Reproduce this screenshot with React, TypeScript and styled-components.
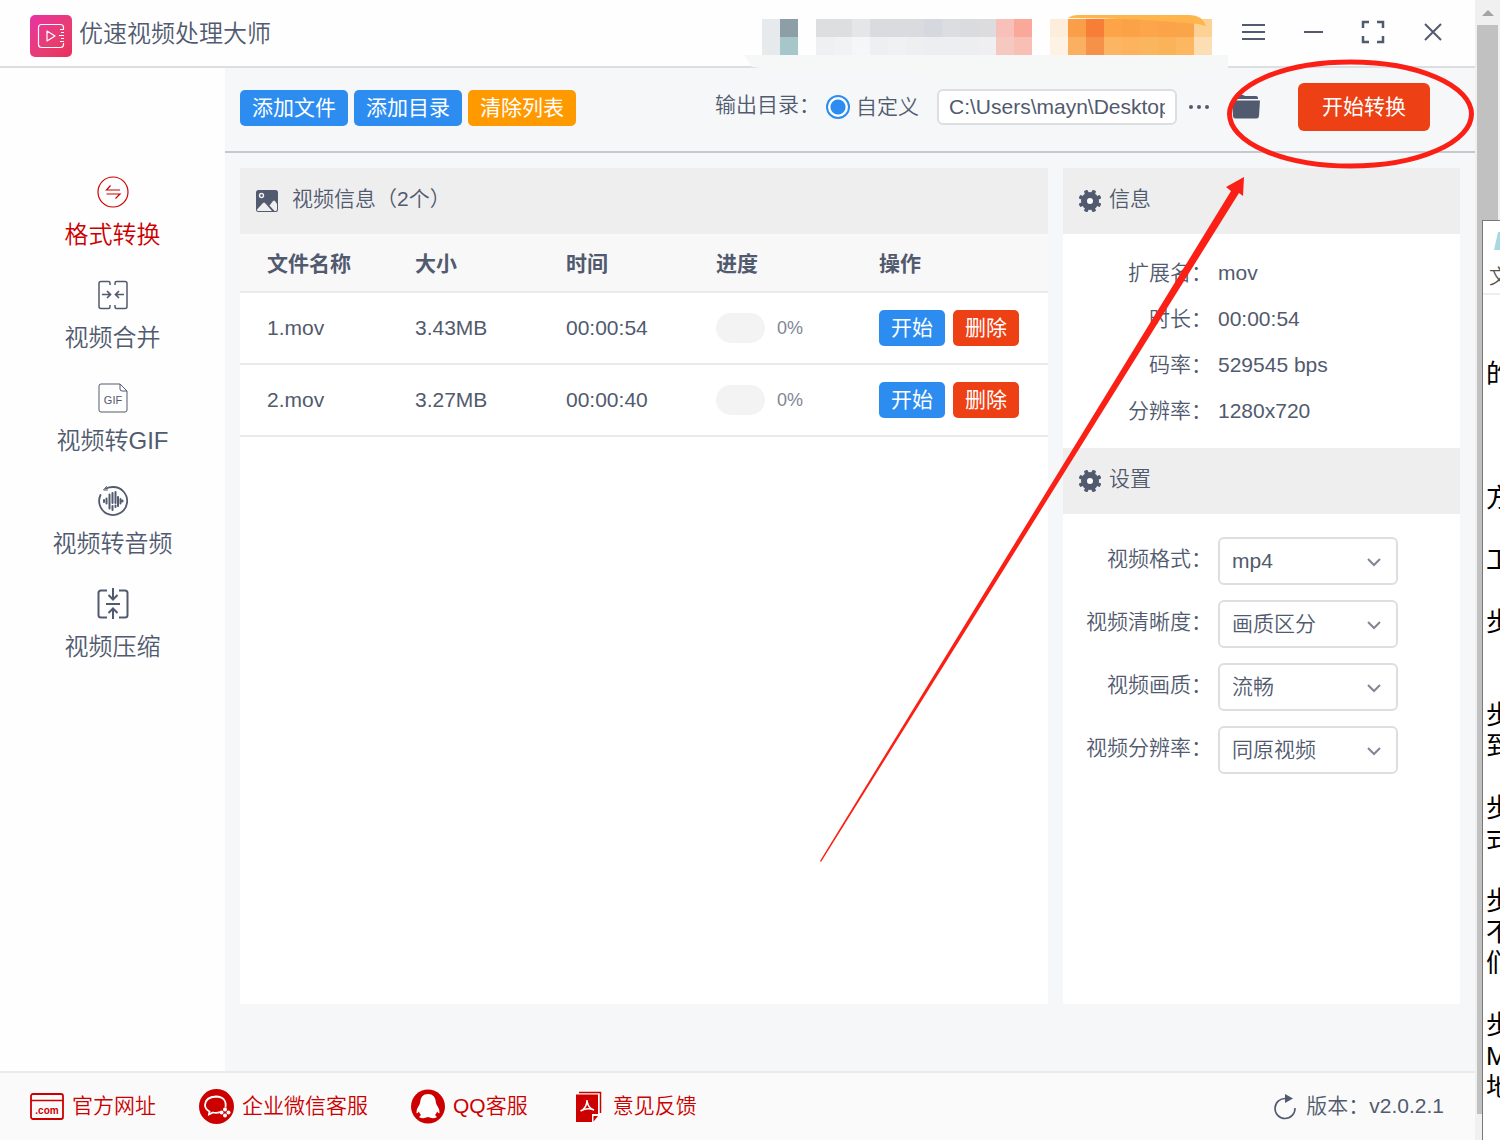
import React, { useState } from "react";
import styled, { createGlobalStyle } from "styled-components";

const ink = "#515a6e";
const blue = "#2d8cf0";
const orange = "#ff9900";
const red = "#ed4014";
const brand = "#cc0000";
const line = "#dcdee2";
const fonts = '"Liberation Sans", "Noto Sans CJK SC", sans-serif';

const GlobalStyle = createGlobalStyle`
  * { box-sizing: border-box; }
  body { margin: 0; background: #f0f0f0; }
  button, input, select { font-family: inherit; font-size: inherit; color: inherit; margin: 0; }
  svg { display: block; flex-shrink: 0; }
`;

const Desktop = styled.div`
  position: relative;
  display: flex;
  min-height: 100vh;
  overflow: hidden;
  font-family: ${fonts};
  font-size: 21px;
  font-weight: 350;
  line-height: 30px;
  color: ${ink};
`;

const Shell = styled.div`
  position: relative;
  flex: 1;
  min-width: 0;
  display: flex;
  flex-direction: column;
  background: #f5f7f9;
`;

const Header = styled.header`
  display: flex;
  align-items: center;
  height: 68px;
  padding: 0 24px 0 30px;
  border-bottom: 2px solid ${line};
  background: #fefefe;
`;

const Title = styled.h1`
  flex: 1;
  margin: 0 0 0 7px;
  padding-top: 2px;
  font-size: 24px;
  font-weight: inherit;
  line-height: 32px;
`;

const LogoBox = styled.div`
  padding-top: 6px;
`;

const WindowControls = styled.div`
  display: flex;
  gap: 24px;
  padding-bottom: 2px;
`;

const IconButton = styled.button`
  display: flex;
  align-items: center;
  justify-content: center;
  padding: 0;
  border: 0;
  background: none;
  cursor: pointer;
`;

const WindowButton = styled(IconButton)`
  width: 36px;
  height: 36px;
`;

const Redaction = styled.svg`
  position: absolute;
  top: 0;
  right: 240px;
`;

const Body = styled.div`
  flex: 1;
  display: flex;
`;

const Sidebar = styled.nav`
  flex: 0 0 225px;
  display: flex;
  flex-direction: column;
  gap: 25px;
  padding-top: 108px;
  background: #fefefe;
`;

const NavItem = styled.button<{ $active?: boolean }>`
  display: flex;
  flex-direction: column;
  align-items: center;
  gap: 8px;
  padding: 0;
  border: 0;
  background: none;
  font-weight: inherit;
  color: ${(p) => (p.$active ? brand : ink)};
  cursor: pointer;
`;

const NavLabel = styled.span`
  height: 38px;
  font-size: 24px;
  line-height: 38px;
`;

const Main = styled.main`
  flex: 1;
  min-width: 0;
  display: flex;
  flex-direction: column;
`;

const Toolbar = styled.div`
  display: flex;
  align-items: center;
  justify-content: space-between;
  padding: 15px 45px 20px 15px;
  border-bottom: 2px solid #c5c8ce;
`;

const ButtonGroup = styled.div<{ $gap: number }>`
  display: flex;
  gap: ${(p) => p.$gap}px;
`;

const FileActions = styled(ButtonGroup)`
  padding-top: 2px;
`;

const Button = styled.button<{ $color: string; $large?: boolean }>`
  height: ${(p) => (p.$large ? 48 : 36)}px;
  padding: 0 ${(p) => (p.$large ? 24 : 12)}px;
  border: 0;
  border-radius: ${(p) => (p.$large ? 6 : 5)}px;
  background: ${(p) => p.$color};
  color: #fff;
  line-height: 30px;
  white-space: nowrap;
  cursor: pointer;
`;

const Output = styled.div`
  display: flex;
  align-items: center;
`;

const OutputTitle = styled.span`
  padding-bottom: 4px;
`;

const RadioLabel = styled.label`
  display: flex;
  align-items: center;
  gap: 6px;
  margin: 0 18px 0 6px;
`;

const Radio = styled.input`
  appearance: none;
  width: 24px;
  height: 24px;
  border: 2px solid ${blue};
  border-radius: 50%;
  background: radial-gradient(circle, ${blue} 7px, #fff 8px);
`;

const PathInput = styled.input`
  width: 240px;
  height: 36px;
  padding: 0 10px;
  border: 2px solid ${line};
  border-radius: 6px;
  background: #fff;
`;

const DotsButton = styled(IconButton)`
  margin: 0 22px 0 11px;
`;

const FolderButton = styled(IconButton)`
  margin-right: 38px;
`;

const Panels = styled.div`
  flex: 1;
  display: flex;
  gap: 15px;
  padding: 15px 15px 67px;
`;

const FilesPanel = styled.section`
  flex: 1;
  min-width: 0;
  background: #fff;
`;

const SidePanel = styled.aside`
  flex: 0 0 397px;
  background: #fff;
`;

const PanelHead = styled.h2<{ $gap: number }>`
  display: flex;
  align-items: center;
  gap: ${(p) => p.$gap}px;
  height: 66px;
  margin: 0;
  padding: 0 15px;
  background: #eee;
  font-size: 21px;
  font-weight: inherit;
`;

const PanelTitle = styled.span`
  padding-bottom: 4px;
`;

const Table = styled.table`
  width: 100%;
  border-collapse: separate;
  border-spacing: 0;
  table-layout: fixed;
`;

const Th = styled.th<{ $width?: number }>`
  width: ${(p) => (p.$width ? `${p.$width}px` : "auto")};
  height: 59px;
  padding: 2px 0 0 27px;
  border-bottom: 2px solid #e8eaec;
  background: #f8f8f9;
  text-align: left;
  font-weight: 700;
`;

const Td = styled.td`
  height: 72px;
  padding: 0 0 0 27px;
  border-bottom: 2px solid #e8eaec;
`;

const Progress = styled.div`
  display: flex;
  align-items: center;
  gap: 12px;
  font-size: 18px;
  color: #808695;
`;

const Track = styled.div`
  width: 49px;
  height: 30px;
  border-radius: 15px;
  background: #f3f3f3;
  overflow: hidden;
`;

const Bar = styled.div`
  height: 100%;
  background: ${blue};
`;

const InfoList = styled.dl`
  margin: 0;
  padding: 16px 0 14px;
`;

const InfoRow = styled.div`
  display: flex;
  align-items: center;
  gap: 6px;
  height: 46px;
`;

const Term = styled.dt`
  width: 149px;
  text-align: right;
`;

const Detail = styled.dd`
  margin: 0;
`;

const Form = styled.form`
  display: flex;
  flex-direction: column;
  gap: 15px;
  padding: 23px 0;
`;

const Field = styled.div`
  display: flex;
  align-items: center;
  gap: 6px;
`;

const FieldLabel = styled.label`
  width: 149px;
  padding-bottom: 4px;
  text-align: right;
`;

const SelectBox = styled.div`
  position: relative;
  width: 180px;
`;

const Select = styled.select`
  appearance: none;
  display: block;
  width: 100%;
  height: 48px;
  padding: 0 36px 2px 12px;
  border: 2px solid ${line};
  border-radius: 6px;
  background: #fff;
  font-weight: inherit;
`;

const Chevron = styled.svg`
  position: absolute;
  top: 20px;
  right: 17px;
  pointer-events: none;
`;

const Footer = styled.footer`
  display: flex;
  align-items: center;
  gap: 43px;
  height: 69px;
  padding: 0 31px 0 30px;
  border-top: 2px solid #e8eaec;
  background: #fafafa;
`;

const FooterLink = styled.a`
  display: flex;
  align-items: center;
  gap: 8px;
  color: ${brand};
  text-decoration: none;
`;

const FooterText = styled.span`
  padding-bottom: 2px;
`;

const Version = styled.div`
  display: flex;
  align-items: center;
  gap: 9px;
  margin-left: auto;
`;

const ScrollColumn = styled.div`
  flex: 0 0 25px;
  display: flex;
  flex-direction: column;
  padding: 0 2px 26px 2px;
  background: #f0f0f0;
`;

const ScrollArrow = styled.div`
  display: flex;
  align-items: center;
  justify-content: center;
  height: 25px;
`;

const ScrollThumb = styled.div`
  flex: 1;
  background: #c1c1c1;
`;

const Notepad = styled.div`
  position: absolute;
  top: 220px;
  right: 0;
  bottom: 0;
  width: 18px;
  overflow: hidden;
  border-top: 1px solid #777;
  border-left: 1px solid #777;
  background: #fff;
  color: #000;
`;

const NotepadHead = styled.div`
  display: flex;
  flex-direction: column;
  gap: 10px;
  height: 74px;
  padding-top: 9px;
  padding-left: 6px;
  border-bottom: 2px solid #eee;
  font-size: 20px;
  color: #555;
  white-space: nowrap;
`;

const NotepadLine = styled.div`
  height: 31px;
  padding-left: 3px;
  font-size: 26px;
  line-height: 31px;
  font-weight: 400;
  white-space: nowrap;
`;

const NotepadText = styled.div`
  padding-top: 64px;
`;

const Annotation = styled.svg`
  position: absolute;
  top: 0;
  right: 0;
  pointer-events: none;
`;

const Logo = () => (
  <svg width="42" height="42" viewBox="0 0 42 42" fill="none" stroke="#fff">
    <defs>
      <linearGradient id="logo" x1="0" y1="0" x2="1" y2="1">
        <stop offset="0" stopColor="#e834a4" />
        <stop offset="0.6" stopColor="#e83d72" />
        <stop offset="1" stopColor="#e92f5b" />
      </linearGradient>
    </defs>
    <rect width="42" height="42" rx="5" fill="url(#logo)" stroke="none" />
    <path d="M33.500 14V12.500a3 3 0 0 0-3-3h-19a3 3 0 0 0-3 3v17a3 3 0 0 0 3 3h19a3 3 0 0 0 3-3V28M17 16v10l8-5zM30 14.500h4M31 17.500h3M29 20.500h5M31 23.500h3M30 26.500h4" strokeWidth="1.200" strokeLinejoin="round" />
  </svg>
);

const ConvertIcon = () => (
  <svg width="32" height="32" viewBox="0 0 32 32" fill="none" stroke="currentColor" strokeWidth="1.200">
    <circle cx="16" cy="16" r="15" />
    <path d="M13.500 9.500 9.500 14h13.500M9.500 18H23l-4.500 4.500" />
  </svg>
);

const MergeIcon = () => (
  <svg width="32" height="32" viewBox="0 0 32 32" fill="none" stroke="currentColor" strokeWidth="1.500">
    <path d="M13 6V4q0-1.500-1.500-1.500H4Q2 2.500 2 4.500v23q0 2 2 2h7.500q1.500 0 1.500-1.500v-2M18 6V4q0-1.500 1.500-1.500H28q2 0 2 2v23q0 2-2 2h-8.500Q18 29.500 18 28v-2" />
    <path d="M5 15.500h8M10 12l3.500 3.500L10 19M27 15.500h-8M22 12l-3.500 3.500L22 19" strokeWidth="1.700" />
  </svg>
);

const GifIcon = () => (
  <svg width="32" height="32" viewBox="0 0 32 32" fill="none" stroke="currentColor">
    <path d="M23 2H4Q2 2 2 4v24q0 2 2 2h24q2 0 2-2V9zM23 2v5q0 2 2 2h5" />
    <text x="16" y="22" fontSize="11" textAnchor="middle" fill="currentColor" stroke="none">GIF</text>
  </svg>
);

const AudioIcon = () => (
  <svg width="32" height="32" viewBox="0 0 32 32" fill="none" stroke="currentColor" strokeLinecap="round">
    <path d="M9 3.500Q12 2 16 2A14 14 0 1 1 3.500 10" strokeWidth="1.800" />
    <path d="M9.500 1.500 6.500 5h4" strokeWidth="1" />
    <path d="M7 15v2M9.500 13.500v5M12.500 9.500v14M15.500 8v10M15.500 21v4M18.500 7v11M18.500 20.500v1.500M21 12v9M23.500 14v4.500M25.500 15.500v1" strokeWidth="2" />
  </svg>
);

const CompressIcon = () => (
  <svg width="32" height="32" viewBox="0 0 32 32" fill="none" stroke="currentColor" strokeWidth="2">
    <path d="M10 2.500H4Q1.500 2.500 1.500 5v22q0 2.500 2.500 2.500h6M22 2.500h6q2.500 0 2.500 2.500v22q0 2.500-2.500 2.500h-6" />
    <path d="M9 16h14M16 0v11M11.500 7l4.500 4.500L20.500 7M16 31V20M11.500 25l4.500-4.500 4.500 4.500" />
  </svg>
);

const GearIcon = () => (
  <svg width="24" height="24" viewBox="-12 -12 24 24" fill="currentColor">
    {[22.5, 67.5, 112.5, 157.5].map((a) => (
      <rect key={a} x="-2" y="-11.500" width="4" height="23" rx="1" transform={`rotate(${a})`} />
    ))}
    <circle r="9" />
    <circle r="3" fill="#fff" />
  </svg>
);

const PictureIcon = () => (
  <svg width="24" height="24" viewBox="0 0 24 24">
    <rect x="1" y="1" width="22" height="22" rx="2.500" fill="currentColor" />
    <circle cx="6.500" cy="6.500" r="2" fill="none" stroke="#eee" strokeWidth="1.400" />
    <path d="M2 20.500 8 14q1-1 2 0l7 8H3q-1 0-1-1.500zM14.500 16.500 18 12q1-1.200 2 0l2 3v5.500q0 1.500-1.500 1.500h-1z" fill="#eee" />
  </svg>
);

const FolderIcon = () => (
  <svg width="28" height="24" viewBox="0 0 28 24" fill="currentColor">
    <path d="M2 3V2q0-2 2-2h7l2 1h11q2 0 2 2v1H2z" />
    <path d="M0 5.500h28l-1 15.500q-.2 2.500-2.500 2.500h-21Q1.200 23.500 1 21z" />
  </svg>
);

const SiteIcon = () => (
  <svg width="34" height="28" viewBox="0 0 34 28" fill="none" stroke="currentColor" strokeWidth="1.800">
    <rect x="1" y="1" width="32" height="25" rx="2" />
    <path d="M1 7.500h32" strokeWidth="1.500" />
    <text x="17" y="21" fontSize="10" fontWeight="700" textAnchor="middle" fill="currentColor" stroke="none">.com</text>
  </svg>
);

const WechatIcon = () => (
  <svg width="35" height="35" viewBox="0 0 35 35" fill="none" stroke="#fff">
    <circle cx="17.500" cy="17.500" r="17.500" fill="currentColor" stroke="none" />
    <path d="M26.500 18.500Q28 8 17 7.500 6.500 8 6 16q0 4 4.500 6.500l-.5 3 4-2q4 1 7-.5" strokeWidth="1.800" />
    <g fill="#fff" stroke="none">
      <circle cx="26" cy="20.500" r="2" />
      <circle cx="29.500" cy="23.500" r="2" />
      <circle cx="22.500" cy="23.500" r="2" />
      <circle cx="26" cy="26.500" r="2" />
    </g>
  </svg>
);

const QqIcon = () => (
  <svg width="34" height="35" viewBox="0 0 34 35">
    <circle cx="17" cy="17.500" r="17" fill="currentColor" />
    <path d="M17 5q-7.500 0-8 9-.5 2-2 4-2 3.500-1.500 6 1 1 2.500-1.500 .5 2 2 3.500-2 1.200-1.500 2.500 4 1.500 8.500-.5 4.500 2 8.500.5 .5-1.300-1.500-2.500 1.500-1.500 2-3.500 1.500 2.500 2.500 1.500 .5-2.500-1.500-6-1.500-2-2-4-.5-9-8-9z" fill="#fff" />
  </svg>
);

const FeedbackIcon = () => (
  <svg width="34" height="32" viewBox="-5 0 34 32" fill="none">
    <path d="M3 1.500h21.500V22" stroke="currentColor" strokeWidth="1.500" />
    <path d="M0 3.500h22V23h-6v8H0z" fill="currentColor" />
    <path d="M17.500 30.500V25H22z" fill="currentColor" />
    <path d="M4.500 20q6.500-3 6.500-11 .5 8 7 10-7-3-13 1" stroke="#fff" strokeWidth="1.500" />
  </svg>
);

const RefreshIcon = () => (
  <svg width="24" height="26" viewBox="0 0 24 26" fill="none" stroke="currentColor">
    <path d="M13 4.500a10 10 0 1 0 9 9.500" strokeWidth="1.600" />
    <path d="M12 0v9l8-4.500z" fill="currentColor" stroke="none" />
  </svg>
);

const mosaic: [number, string, string][] = [
  [762, "#e7eaed", "#e7eaec"], [780, "#8c9fa7", "#a6c7ca"], [816, "#dcdee0", "#eff0f1"],
  [834, "#dcdee0", "#f1f2f3"], [852, "#e5e6e8", "#f5f6f7"], [870, "#d9dbde", "#eeeff1"],
  [888, "#d9dbde", "#eff1f2"], [906, "#dadbdf", "#edeff0"], [924, "#d5d8de", "#eceef1"],
  [942, "#dcdde0", "#eceef1"], [960, "#dadbdf", "#edeef0"], [978, "#dcdcdf", "#efeff1"],
  [996, "#f7c0b8", "#f5c9c0"], [1014, "#f9a899", "#f8bfb5"], [1050, "#fdeddb", "#fdf2e4"],
  [1068, "#fb9e48", "#fbaf60"], [1086, "#f67e36", "#f69149"], [1104, "#fda448", "#fcb663"],
  [1122, "#fba246", "#fcb35c"], [1140, "#fda54a", "#fab65e"], [1158, "#fba348", "#fbb35a"],
  [1176, "#fba54a", "#fdb760"], [1194, "#fcd193", "#fbdeb3"],
];

const RedactedBanner = () => (
  <Redaction width="495" height="80" viewBox="740 0 495 80">
    <path d="M744 55h484v14q-60 10-204 10l-240-9-32-3z" fill="#f6f8f8" />
    {mosaic.map(([x, top, bottom]) => (
      <g key={x}>
        <rect x={x} y="19" width="18" height="18" fill={top} />
        <rect x={x} y="37" width="18" height="18" fill={bottom} />
      </g>
    ))}
    <path d="M1068 18q4-3 10-3h112q12 0 16 11l-8-2q-60-6-130-6z" fill="#fdb54c" />
  </Redaction>
);

const navItems = [
  { label: "格式转换", Icon: ConvertIcon },
  { label: "视频合并", Icon: MergeIcon },
  { label: "视频转GIF", Icon: GifIcon },
  { label: "视频转音频", Icon: AudioIcon },
  { label: "视频压缩", Icon: CompressIcon },
];

const files = [
  { name: "1.mov", size: "3.43MB", time: "00:00:54", progress: 0 },
  { name: "2.mov", size: "3.27MB", time: "00:00:40", progress: 0 },
];

const info = [
  ["扩展名：", "mov"],
  ["时长：", "00:00:54"],
  ["码率：", "529545 bps"],
  ["分辨率：", "1280x720"],
];

const settings = [
  { id: "format", label: "视频格式：", value: "mp4" },
  { id: "clarity", label: "视频清晰度：", value: "画质区分" },
  { id: "quality", label: "视频画质：", value: "流畅" },
  { id: "resolution", label: "视频分辨率：", value: "同原视频" },
];

const links = [
  { label: "官方网址", Icon: SiteIcon },
  { label: "企业微信客服", Icon: WechatIcon },
  { label: "QQ客服", Icon: QqIcon },
  { label: "意见反馈", Icon: FeedbackIcon },
];

const noteLines = [
  "的", "", "", "", "方", "", "工", "", "步", "", "", "步", "到", "", "步", "式",
  "", "步", "不", "们", "", "步", "M", "地",
];

export default function App() {
  const [active, setActive] = useState("格式转换");
  const [path, setPath] = useState("C:\\Users\\mayn\\Desktop");

  return (
    <Desktop>
      <GlobalStyle />
      <Shell>
        <Header>
          <LogoBox><Logo /></LogoBox>
          <Title>优速视频处理大师</Title>
          <WindowControls>
            <WindowButton aria-label="菜单">
              <svg width="24" height="24" viewBox="0 0 24 24" stroke="currentColor" strokeWidth="2"><path d="M1 5h23M1 12h23M1 19h23" /></svg>
            </WindowButton>
            <WindowButton aria-label="最小化">
              <svg width="24" height="24" viewBox="0 0 24 24" stroke="currentColor" strokeWidth="2"><path d="M3 12h19" /></svg>
            </WindowButton>
            <WindowButton aria-label="最大化">
              <svg width="24" height="24" viewBox="0 0 24 24" fill="none" stroke="currentColor" strokeWidth="2.500"><path d="M8 2H2v6M16 2h6v6M8 22H2v-6M16 22h6v-6" /></svg>
            </WindowButton>
            <WindowButton aria-label="关闭">
              <svg width="24" height="24" viewBox="0 0 24 24" stroke="currentColor" strokeWidth="2"><path d="m4 4 16 16M20 4 4 20" /></svg>
            </WindowButton>
          </WindowControls>
        </Header>

        <Body>
          <Sidebar>
            {navItems.map(({ label, Icon }) => (
              <NavItem key={label} $active={label === active} onClick={() => setActive(label)}>
                <Icon />
                <NavLabel>{label}</NavLabel>
              </NavItem>
            ))}
          </Sidebar>

          <Main>
            <Toolbar>
              <FileActions $gap={6}>
                <Button $color={blue}>添加文件</Button>
                <Button $color={blue}>添加目录</Button>
                <Button $color={orange}>清除列表</Button>
              </FileActions>
              <Output>
                <OutputTitle>输出目录：</OutputTitle>
                <RadioLabel>
                  <Radio type="radio" name="output" defaultChecked />
                  自定义
                </RadioLabel>
                <PathInput aria-label="输出目录" value={path} onChange={(e) => setPath(e.target.value)} />
                <DotsButton aria-label="浏览">
                  <svg width="22" height="6" viewBox="0 0 22 6" fill="currentColor"><circle cx="3" cy="3" r="2" /><circle cx="11" cy="3" r="2" /><circle cx="19" cy="3" r="2" /></svg>
                </DotsButton>
                <FolderButton aria-label="打开目录"><FolderIcon /></FolderButton>
                <Button $color={red} $large>开始转换</Button>
              </Output>
            </Toolbar>

            <Panels>
              <FilesPanel>
                <PanelHead $gap={13}>
                  <PictureIcon />
                  <PanelTitle>视频信息（2个）</PanelTitle>
                </PanelHead>
                <Table>
                  <thead>
                    <tr>
                      <Th $width={148}>文件名称</Th>
                      <Th $width={151}>大小</Th>
                      <Th $width={150}>时间</Th>
                      <Th $width={163}>进度</Th>
                      <Th>操作</Th>
                    </tr>
                  </thead>
                  <tbody>
                    {files.map((f) => (
                      <tr key={f.name}>
                        <Td>{f.name}</Td>
                        <Td>{f.size}</Td>
                        <Td>{f.time}</Td>
                        <Td>
                          <Progress>
                            <Track><Bar style={{ width: `${f.progress}%` }} /></Track>
                            {f.progress}%
                          </Progress>
                        </Td>
                        <Td>
                          <ButtonGroup $gap={8}>
                            <Button $color={blue}>开始</Button>
                            <Button $color={red}>删除</Button>
                          </ButtonGroup>
                        </Td>
                      </tr>
                    ))}
                  </tbody>
                </Table>
              </FilesPanel>

              <SidePanel>
                <PanelHead $gap={7}>
                  <GearIcon />
                  <PanelTitle>信息</PanelTitle>
                </PanelHead>
                <InfoList>
                  {info.map(([term, detail]) => (
                    <InfoRow key={term}>
                      <Term>{term}</Term>
                      <Detail>{detail}</Detail>
                    </InfoRow>
                  ))}
                </InfoList>
                <PanelHead $gap={7}>
                  <GearIcon />
                  <PanelTitle>设置</PanelTitle>
                </PanelHead>
                <Form>
                  {settings.map((s) => (
                    <Field key={s.id}>
                      <FieldLabel htmlFor={s.id}>{s.label}</FieldLabel>
                      <SelectBox>
                        <Select id={s.id} defaultValue={s.value}>
                          <option>{s.value}</option>
                        </Select>
                        <Chevron width="14" height="10" viewBox="0 0 14 10" fill="none" stroke="#808695" strokeWidth="2">
                          <path d="m1 2 6 6 6-6" />
                        </Chevron>
                      </SelectBox>
                    </Field>
                  ))}
                </Form>
              </SidePanel>
            </Panels>
          </Main>
        </Body>

        <Footer>
          {links.map(({ label, Icon }) => (
            <FooterLink key={label} href="#">
              <Icon />
              <FooterText>{label}</FooterText>
            </FooterLink>
          ))}
          <Version>
            <RefreshIcon />
            <FooterText>版本：v2.0.2.1</FooterText>
          </Version>
        </Footer>

        <RedactedBanner />
        <Annotation width="675" height="880" viewBox="800 0 675 880">
          <ellipse cx="1350.500" cy="114" rx="121" ry="52" fill="none" stroke="#fb2016" strokeWidth="5" />
          <path d="M820 861 1231 191l-5-4 18-10-1 19-4-3L821 862z" fill="#fb2016" />
        </Annotation>
      </Shell>

      <ScrollColumn>
        <ScrollArrow>
          <svg width="12" height="6" viewBox="0 0 12 6" fill="#a3a3a3"><path d="M0 6 6 0l6 6z" /></svg>
        </ScrollArrow>
        <ScrollThumb />
      </ScrollColumn>

      <Notepad>
        <NotepadHead>
          <svg width="20" height="22" viewBox="0 0 20 22"><path d="M9 2h11v18H5z" fill="#a9d9de" /></svg>
          文
        </NotepadHead>
        <NotepadText>
          {noteLines.map((text, i) => (
            <NotepadLine key={i}>{text}</NotepadLine>
          ))}
        </NotepadText>
      </Notepad>
    </Desktop>
  );
}
